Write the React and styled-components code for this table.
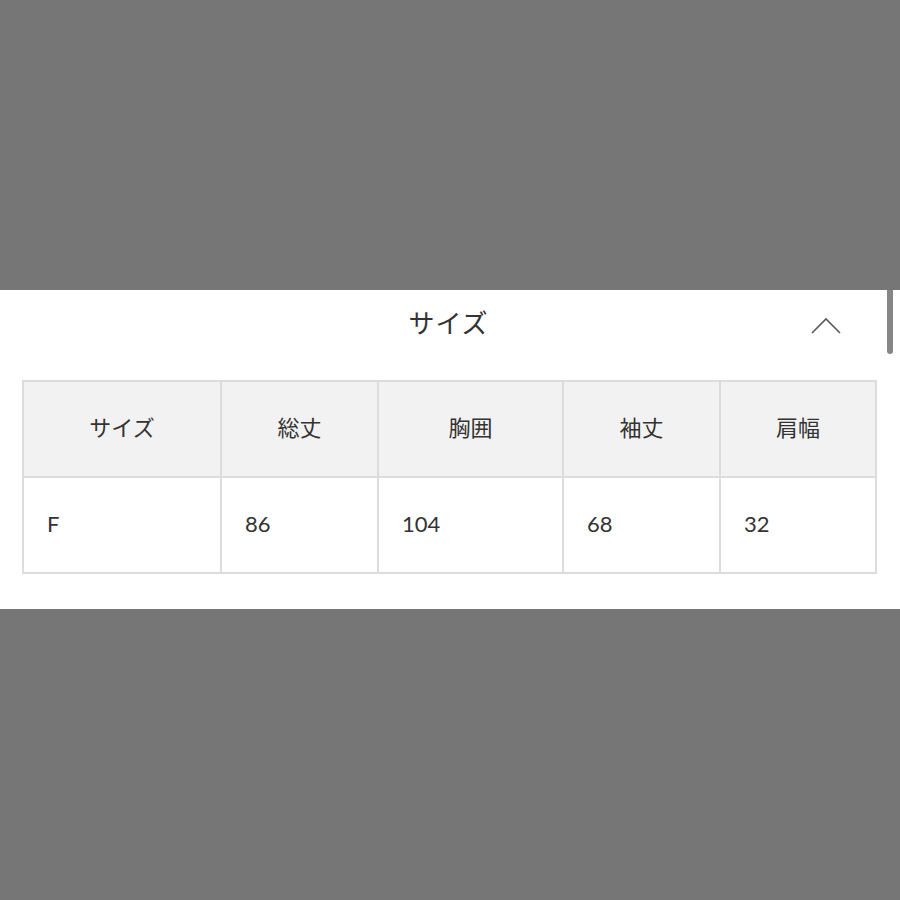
import React from "react";
import styled, { createGlobalStyle } from "styled-components";

const Global = createGlobalStyle`
  html, body { margin: 0; padding: 0; background: #767676; }
  body { font-family: Lato, "Noto Sans CJK JP", sans-serif; }
`;

const Page = styled.div`
  width: 900px;
  height: 900px;
  background: #767676;
  padding-top: 290px;
  box-sizing: border-box;
`;

const Panel = styled.section`
  position: relative;
  background: #ffffff;
  height: 319px;
  padding: 0 25px 0 22px;
  box-sizing: border-box;
`;

const Header = styled.div`
  height: 64px;
  display: flex;
  align-items: center;
  justify-content: center;
  position: relative;
`;

const Title = styled.h2`
  margin: 0 0 2px 0;
  font-family: "Noto Sans CJK JP", sans-serif;
  font-weight: 400;
  font-size: 26px;
  color: #333;
  letter-spacing: 1px;
`;

const Toggle = styled.button`
  position: absolute;
  right: 33px;
  top: 26px;
  width: 32px;
  height: 20px;
  border: 0;
  padding: 0;
  background: none;
  display: flex;
  align-items: center;
  justify-content: center;
`;

const ScrollThumb = styled.div`
  position: absolute;
  right: 7px;
  top: 0;
  width: 6px;
  height: 64px;
  background: #868686;
  border-radius: 0 0 3px 3px;
`;

const Table = styled.table`
  margin-top: 26px;
  width: 853px;
  border-collapse: collapse;
  table-layout: fixed;
  border: 2px solid #dcdcdc;
`;

const Th = styled.th`
  height: 88px;
  background: #f2f2f2;
  border: 2px solid #dcdcdc;
  font-family: "Noto Sans CJK JP", sans-serif;
  font-weight: 400;
  font-size: 22px;
  color: #333;
  text-align: center;
  padding: 0 0 6px 0;
`;

const Td = styled.td`
  height: 90px;
  background: #fff;
  border: 2px solid #dcdcdc;
  font-family: Lato, sans-serif;
  font-size: 22px;
  color: #333;
  text-align: left;
  padding: 0 0 4px 23px;
`;

const widths = [198, 157, 185, 157, 156];
const heads = ["サイズ", "総丈", "胸囲", "袖丈", "肩幅"];
const values = ["F", "86", "104", "68", "32"];

export default function App() {
  return (
    <Page>
      <Global />
      <Panel>
        <Header>
          <Title>サイズ</Title>
          <Toggle aria-label="close">
            <svg width="32" height="18" viewBox="0 0 32 18">
              <polyline points="2,16 16,2 30,16" fill="none" stroke="#5a5a5a" strokeWidth="1.6" />
            </svg>
          </Toggle>
        </Header>
        <ScrollThumb />
        <Table>
          <colgroup>
            {widths.map((w, i) => (
              <col key={i} style={{ width: w }} />
            ))}
          </colgroup>
          <thead>
            <tr>
              {heads.map((h) => (
                <Th key={h}>{h}</Th>
              ))}
            </tr>
          </thead>
          <tbody>
            <tr>
              {values.map((v, i) => (
                <Td key={i}>{v}</Td>
              ))}
            </tr>
          </tbody>
        </Table>
      </Panel>
    </Page>
  );
}
